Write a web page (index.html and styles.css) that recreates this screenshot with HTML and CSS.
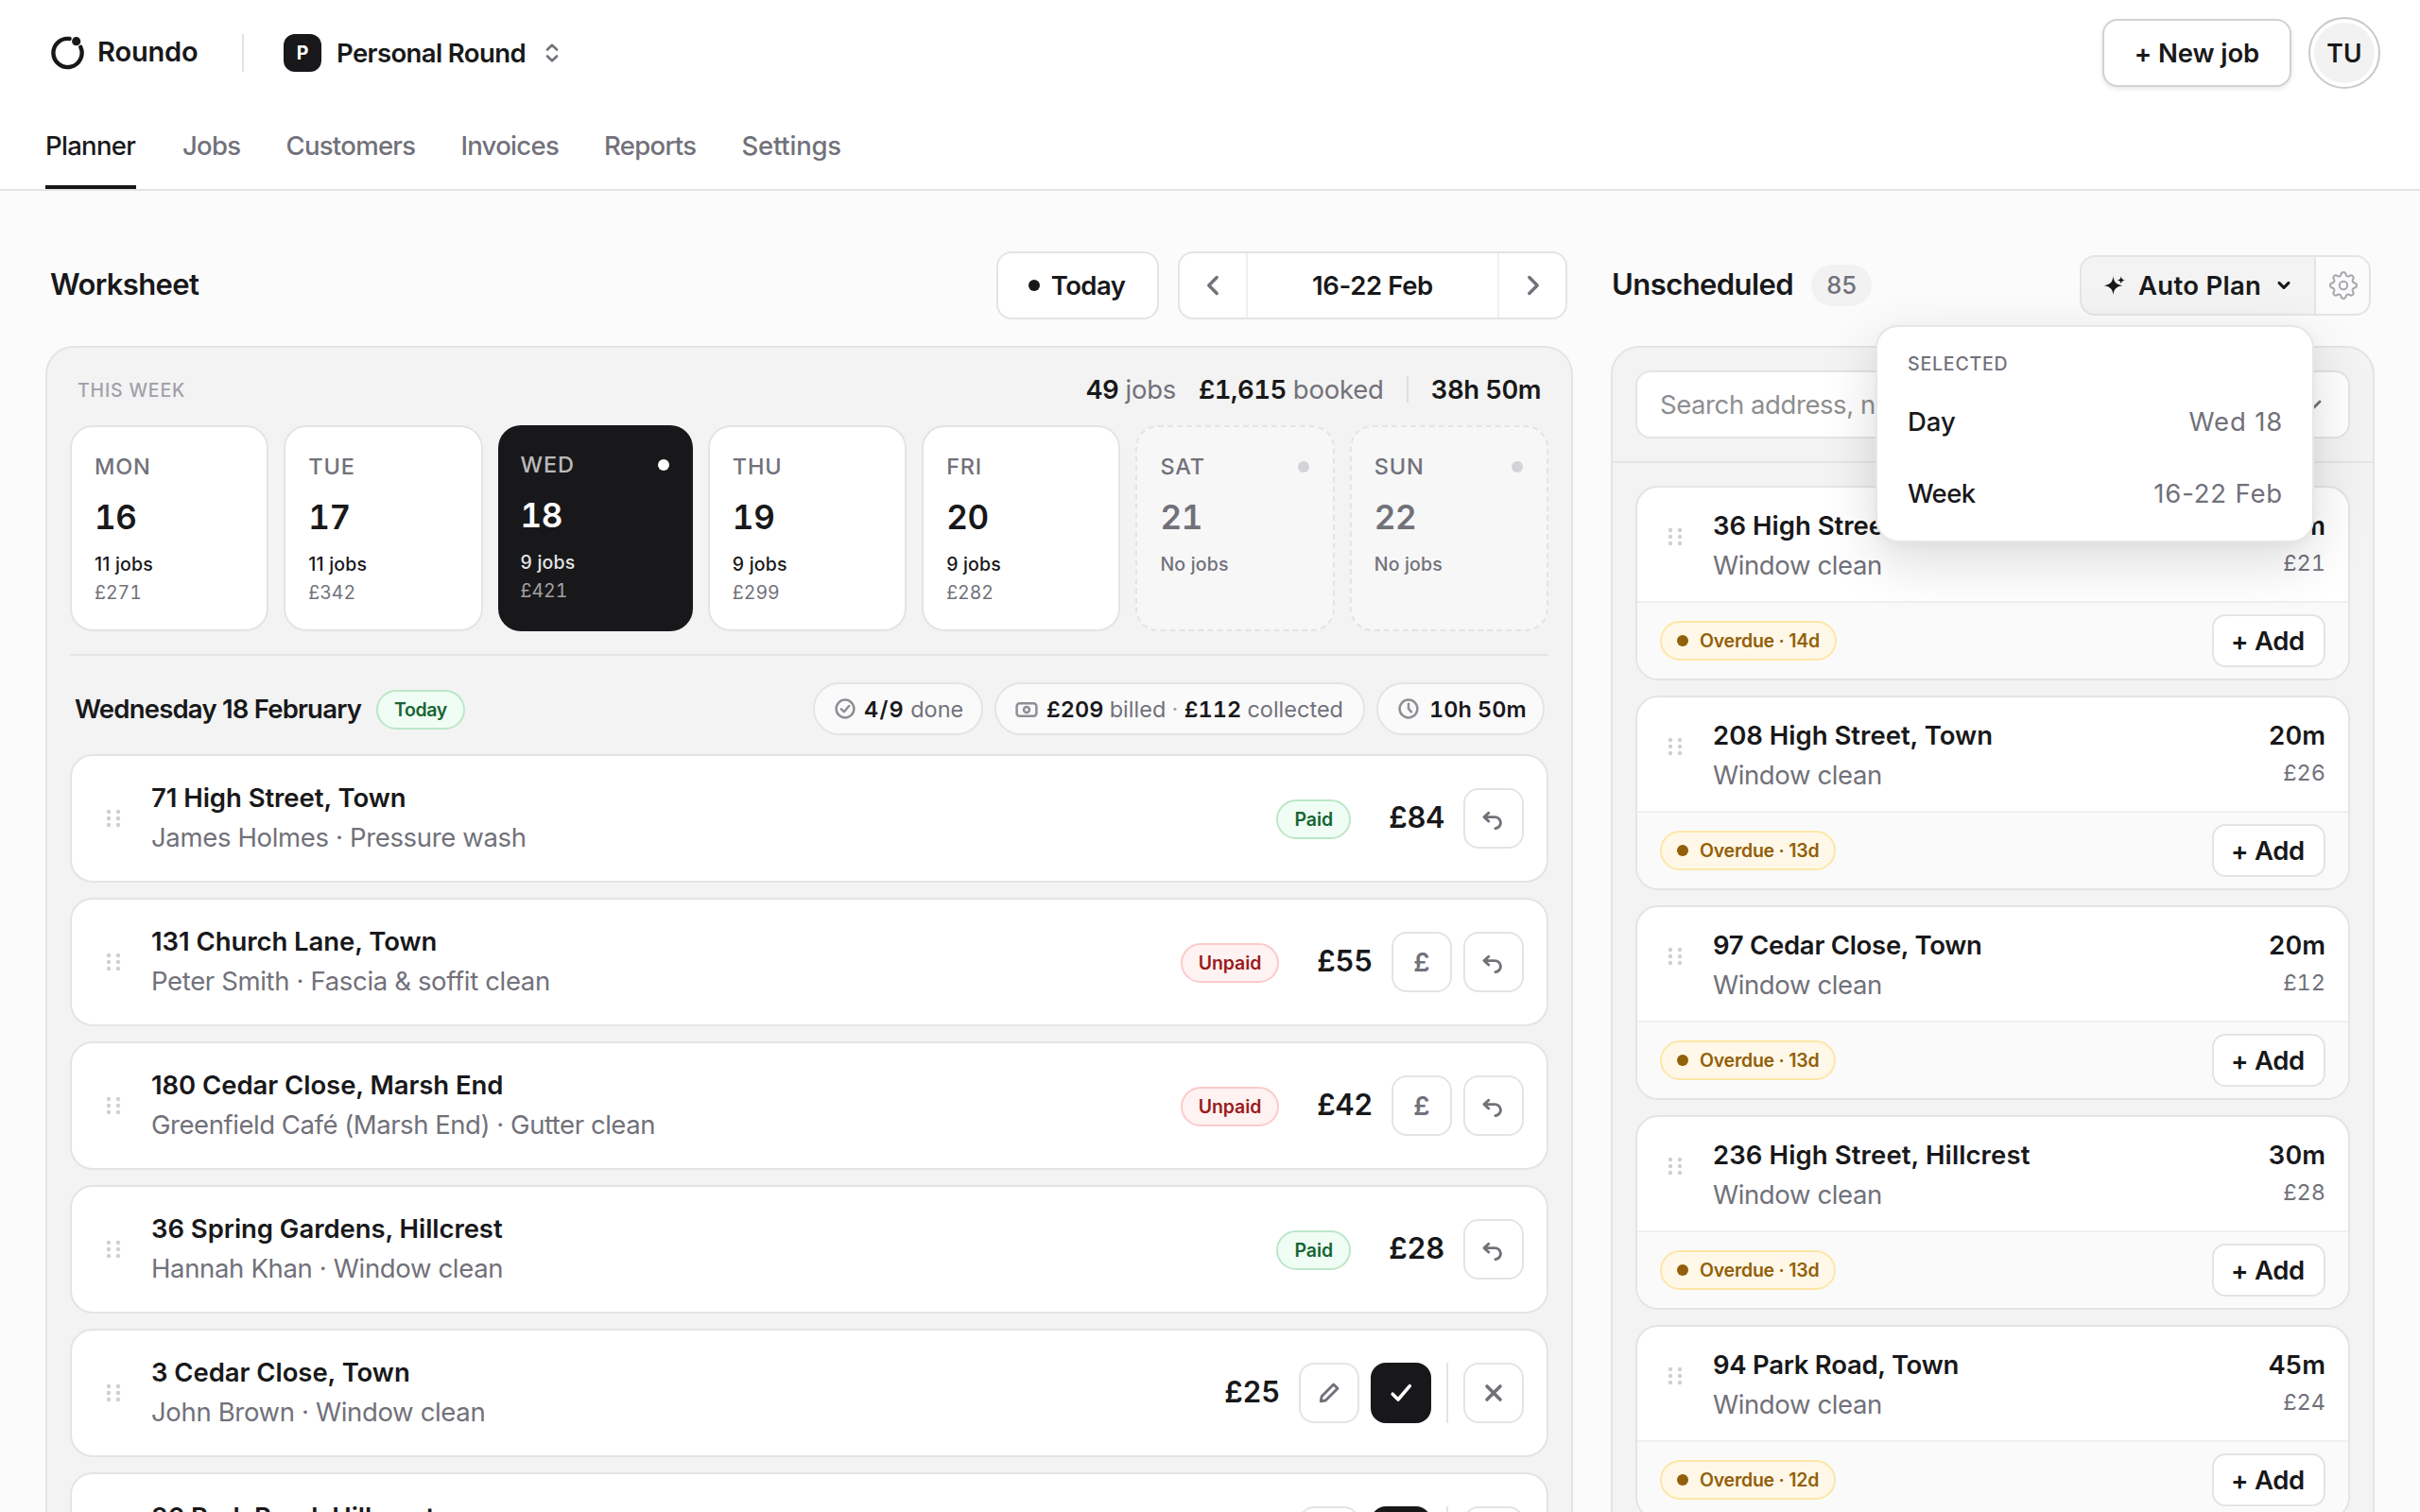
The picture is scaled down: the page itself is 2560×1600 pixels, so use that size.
FILE: index.html
```
<!DOCTYPE html>
<html lang="en">
<head>
<meta charset="utf-8">
<title>Roundo – Planner</title>
<link rel="stylesheet" href="styles.css">
</head>
<body>
<svg class="sprite" aria-hidden="true">
  <symbol id="i-grip" viewBox="0 0 16 20"><g fill="currentColor"><circle cx="3" cy="3" r="2.2"/><circle cx="13" cy="3" r="2.2"/><circle cx="3" cy="10" r="2.2"/><circle cx="13" cy="10" r="2.2"/><circle cx="3" cy="17" r="2.2"/><circle cx="13" cy="17" r="2.2"/></g></symbol>
  <symbol id="i-undo" viewBox="0 0 24 24"><path d="M6.3 6.2 1.6 10.6l4.7 4.4M1.6 10.6h10.9a6 6 0 0 1 1 12" transform="translate(.4 0)"/></symbol>
  <symbol id="i-edit" viewBox="0 0 24 24"><path d="M16.7 3 21 7.2 8.2 20 3.3 20.8 4.1 15.8Z"/></symbol>
  <symbol id="i-check" viewBox="0 0 24 24"><path d="M3.2 13.2 9 19 21.3 4.7"/></symbol>
  <symbol id="i-x" viewBox="0 0 24 24"><path d="M5 5 19 19M19 5 5 19"/></symbol>
</svg>

<header class="header">
  <div class="topbar">
    <a class="brand">
      <svg class="brand-mark" viewBox="0 0 48 48"><path d="M25.6 9A15.1 15.1 0 1 0 37.3 17.8" fill="none" stroke="#18181a" stroke-width="4.4" stroke-linecap="round"/><circle cx="32.7" cy="11.7" r="4.6" fill="#18181a"/></svg>
      <span class="brand-name">Roundo</span>
    </a>
    <span class="topbar-rule"></span>
    <div class="workspace">
      <span class="workspace-badge">P</span>
      <span class="workspace-name">Personal Round</span>
      <svg class="workspace-arrows" viewBox="0 0 16 24"><path d="M3 8.5 8 3.8 13 8.5M3 15.5 8 20.2 13 15.5"/></svg>
    </div>
    <button class="new-job">+ New job</button>
    <span class="avatar"><span class="avatar-inner">TU</span></span>
  </div>
  <nav class="tabs">
    <a class="tab tab-active">Planner</a>
    <a class="tab">Jobs</a>
    <a class="tab">Customers</a>
    <a class="tab">Invoices</a>
    <a class="tab">Reports</a>
    <a class="tab tab-wide">Settings</a>
  </nav>
</header>

<main class="main">
  <section class="col-work">
    <div class="title-row title-row-work">
      <h1 class="title">Worksheet</h1>
      <button class="today-btn"><span class="dot"></span>Today</button>
      <div class="range">
        <span class="range-step"><svg class="range-icon" viewBox="0 0 24 24"><path d="M16.2 3.5 7.8 12l8.4 8.5"/></svg></span>
        <span class="range-label">16-22 Feb</span>
        <span class="range-step"><svg class="range-icon" viewBox="0 0 24 24"><path d="M8.8 3.5 17.2 12 8.8 20.5"/></svg></span>
      </div>
    </div>

    <div class="panel">
      <div class="week-head">
        <span class="week-label">THIS WEEK</span>
        <span class="week-stats">
          <span><b>49</b> jobs</span>
          <span><b>£1,615</b> booked</span>
          <span class="stats-rule"></span>
          <b>38h 50m</b>
        </span>
      </div>
      <div class="days">
        <div class="day"><div class="day-name">MON</div><div class="day-num">16</div><div class="day-jobs">11 jobs</div><div class="day-sum">£271</div></div>
        <div class="day"><div class="day-name">TUE</div><div class="day-num">17</div><div class="day-jobs">11 jobs</div><div class="day-sum">£342</div></div>
        <div class="day day-on"><div class="day-name">WED<span class="dot"></span></div><div class="day-num">18</div><div class="day-jobs">9 jobs</div><div class="day-sum">£421</div></div>
        <div class="day"><div class="day-name">THU</div><div class="day-num">19</div><div class="day-jobs">9 jobs</div><div class="day-sum">£299</div></div>
        <div class="day"><div class="day-name">FRI</div><div class="day-num">20</div><div class="day-jobs">9 jobs</div><div class="day-sum">£282</div></div>
        <div class="day day-off"><div class="day-name">SAT<span class="dot"></span></div><div class="day-num">21</div><div class="day-jobs">No jobs</div></div>
        <div class="day day-off"><div class="day-name">SUN<span class="dot"></span></div><div class="day-num">22</div><div class="day-jobs">No jobs</div></div>
      </div>
      <hr class="rule">
      <div class="date-head">
        <h2 class="date-title">Wednesday 18 February</h2>
        <span class="tag tag-green">Today</span>
        <div class="summary">
          <span class="chip chip-done"><svg class="chip-icon" viewBox="0 0 24 24"><circle cx="12" cy="12" r="9.4"/><path d="M7.9 12.4 10.9 15.2 16.2 9"/></svg><span><b>4/9</b> done</span></span>
          <span class="chip chip-money"><svg class="chip-icon" viewBox="0 0 24 24"><rect x="1.6" y="6.2" width="20.8" height="13.6" rx="3"/><circle cx="12" cy="13" r="3"/></svg><span><b>£209</b> billed <i>·</i> <b>£112</b> collected</span></span>
          <span class="chip chip-time"><svg class="chip-icon" viewBox="0 0 24 24"><circle cx="12" cy="12" r="9.4"/><path d="M12 6.8V12l3 3.4"/></svg><b>10h 50m</b></span>
        </div>
      </div>
      <div class="jobs">
        <article class="job">
          <svg class="grip"><use href="#i-grip"/></svg>
          <div class="job-text"><div class="job-title">71 High Street, Town</div><div class="job-sub">James Holmes · Pressure wash</div></div>
          <span class="tag tag-green">Paid</span><span class="price">£84</span>
          <div class="actions"><button class="act"><svg class="act-icon"><use href="#i-undo"/></svg></button></div>
        </article>
        <article class="job">
          <svg class="grip"><use href="#i-grip"/></svg>
          <div class="job-text"><div class="job-title">131 Church Lane, Town</div><div class="job-sub">Peter Smith · Fascia &amp; soffit clean</div></div>
          <span class="tag tag-red">Unpaid</span><span class="price">£55</span>
          <div class="actions"><button class="act">£</button><button class="act"><svg class="act-icon"><use href="#i-undo"/></svg></button></div>
        </article>
        <article class="job">
          <svg class="grip"><use href="#i-grip"/></svg>
          <div class="job-text"><div class="job-title">180 Cedar Close, Marsh End</div><div class="job-sub job-sub-long">Greenfield Café (Marsh End) · Gutter clean</div></div>
          <span class="tag tag-red">Unpaid</span><span class="price">£42</span>
          <div class="actions"><button class="act">£</button><button class="act"><svg class="act-icon"><use href="#i-undo"/></svg></button></div>
        </article>
        <article class="job">
          <svg class="grip"><use href="#i-grip"/></svg>
          <div class="job-text"><div class="job-title">36 Spring Gardens, Hillcrest</div><div class="job-sub">Hannah Khan · Window clean</div></div>
          <span class="tag tag-green">Paid</span><span class="price">£28</span>
          <div class="actions"><button class="act"><svg class="act-icon"><use href="#i-undo"/></svg></button></div>
        </article>
        <article class="job">
          <svg class="grip"><use href="#i-grip"/></svg>
          <div class="job-text"><div class="job-title">3 Cedar Close, Town</div><div class="job-sub">John Brown · Window clean</div></div>
          <span class="price">£25</span>
          <div class="actions"><button class="act"><svg class="act-icon"><use href="#i-edit"/></svg></button><button class="act act-done"><svg class="act-icon act-bold"><use href="#i-check"/></svg></button><span class="act-rule"></span><button class="act"><svg class="act-icon act-bold"><use href="#i-x"/></svg></button></div>
        </article>
        <article class="job">
          <svg class="grip"><use href="#i-grip"/></svg>
          <div class="job-text"><div class="job-title">86 Park Road, Hillcrest</div></div>
          <div class="actions"><button class="act"><svg class="act-icon"><use href="#i-edit"/></svg></button><button class="act act-done"><svg class="act-icon act-bold"><use href="#i-check"/></svg></button><span class="act-rule"></span><button class="act"><svg class="act-icon act-bold"><use href="#i-x"/></svg></button></div>
        </article>
      </div>
    </div>
  </section>

  <aside class="col-side">
    <div class="title-row title-row-side">
      <h1 class="title title-side">Unscheduled</h1>
      <span class="count">85</span>
      <div class="plan">
        <button class="plan-main">
          <svg class="plan-spark" viewBox="0 0 24 24"><path d="M11.5 2.3C12.2 8.6 14.8 11.2 21.2 12.2 14.8 13.2 12.2 15.8 11.5 22 10.8 15.8 8.2 13.2 1.8 12.2 8.2 11.2 10.8 8.6 11.5 2.3Z"/><path d="M19.8 2.2C20.1 4.8 21.2 6 23.8 6.4 21.2 6.8 20.1 8 19.8 10.6 19.5 8 18.4 6.8 15.8 6.4 18.4 6 19.5 4.8 19.8 2.2Z"/></svg>
          <span>Auto Plan</span>
          <svg class="plan-caret" viewBox="0 0 14 10"><path d="M2 2.4 7 7.4 12 2.4"/></svg>
        </button>
        <button class="plan-gear"><svg class="gear" viewBox="-16 -16 32 32"><g id="gear-teeth"><path d="M0-14C3.6-14 1.34-10.81 4.02-9.7C6.7-8.59 7.35-12.45 9.9-9.9C12.45-7.35 8.59-6.7 9.7-4.02C10.81-1.34 14-3.6 14 0"/></g><use href="#gear-teeth" transform="rotate(90)"/><use href="#gear-teeth" transform="rotate(180)"/><use href="#gear-teeth" transform="rotate(270)"/><circle r="4.2"/></svg></button>
        <div class="menu">
          <div class="menu-label">SELECTED</div>
          <div class="menu-item"><span class="menu-key menu-day">Day</span><span class="menu-val">Wed 18</span></div>
          <div class="menu-item"><span class="menu-key">Week</span><span class="menu-val">16-22 Feb</span></div>
        </div>
      </div>
    </div>

    <div class="panel panel-side">
      <div class="filters">
        <div class="search"><span>Search address, name</span><svg class="search-caret" viewBox="0 0 16 12"><path d="M2 3 8 9 14 3"/></svg></div>
      </div>
      <div class="queue">
        <article class="card">
          <div class="card-top"><svg class="grip"><use href="#i-grip"/></svg><div class="job-text"><div class="card-title">36 High Street, Town</div><div class="card-sub">Window clean</div></div><div class="card-meta"><div class="card-time">20m</div><div class="card-price">£21</div></div></div>
          <div class="card-foot"><span class="tag tag-amber"><span class="dot"></span>Overdue · 14d</span><button class="add">+ Add</button></div>
        </article>
        <article class="card">
          <div class="card-top"><svg class="grip"><use href="#i-grip"/></svg><div class="job-text"><div class="card-title">208 High Street, Town</div><div class="card-sub">Window clean</div></div><div class="card-meta"><div class="card-time">20m</div><div class="card-price">£26</div></div></div>
          <div class="card-foot"><span class="tag tag-amber"><span class="dot"></span>Overdue · 13d</span><button class="add">+ Add</button></div>
        </article>
        <article class="card">
          <div class="card-top"><svg class="grip"><use href="#i-grip"/></svg><div class="job-text"><div class="card-title card-title-tight">97 Cedar Close, Town</div><div class="card-sub">Window clean</div></div><div class="card-meta"><div class="card-time">20m</div><div class="card-price">£12</div></div></div>
          <div class="card-foot"><span class="tag tag-amber"><span class="dot"></span>Overdue · 13d</span><button class="add">+ Add</button></div>
        </article>
        <article class="card">
          <div class="card-top"><svg class="grip"><use href="#i-grip"/></svg><div class="job-text"><div class="card-title card-title-loose">236 High Street, Hillcrest</div><div class="card-sub">Window clean</div></div><div class="card-meta"><div class="card-time">30m</div><div class="card-price">£28</div></div></div>
          <div class="card-foot"><span class="tag tag-amber"><span class="dot"></span>Overdue · 13d</span><button class="add">+ Add</button></div>
        </article>
        <article class="card">
          <div class="card-top"><svg class="grip"><use href="#i-grip"/></svg><div class="job-text"><div class="card-title card-title-tight">94 Park Road, Town</div><div class="card-sub">Window clean</div></div><div class="card-meta"><div class="card-time">45m</div><div class="card-price">£24</div></div></div>
          <div class="card-foot"><span class="tag tag-amber"><span class="dot"></span>Overdue · 12d</span><button class="add">+ Add</button></div>
        </article>
      </div>
    </div>
  </aside>
</main>
</body>
</html>
```
FILE: styles.css
```
:root {
  --ink: #18181a;
  --muted: #71717a;
  --faint: #a1a1aa;
  --line: #e4e4e4;
  --line-soft: #f0f0f0;
  --panel: #f3f3f3;
  --page: #fbfbfb;
}

* { box-sizing: border-box; margin: 0; }

body {
  height: 1600px;
  overflow: hidden;
  display: flex;
  flex-direction: column;
  background: var(--page);
  color: var(--ink);
  font-family: Inter, "Liberation Sans", sans-serif;
  font-size: 27.5px;
}

button { font: inherit; color: inherit; padding: 0; background: #fff; border: 2px solid var(--line); }
b { font-weight: 600; color: var(--ink); }
svg { display: block; flex: none; overflow: visible; }
.sprite { position: absolute; width: 0; height: 0; }

.dot { width: 12px; height: 12px; border-radius: 50%; background: currentColor; flex: none; }

/* Header */
.header { flex: none; background: #fff; border-bottom: 2px solid var(--line); }
.topbar { height: 112px; padding: 0 42px 0 48px; display: flex; align-items: center; }
.brand { display: flex; align-items: center; }
.brand-mark { width: 48px; height: 48px; }
.brand-name { margin: 0 0 3px 7px; width: 107px; font-size: 29px; font-weight: 600; letter-spacing: -.0055em; }
.topbar-rule { width: 2px; height: 40px; margin: 0 42px 0 46px; background: var(--line); }
.workspace { display: flex; align-items: center; }
.workspace-badge { width: 40px; height: 40px; border-radius: 12px; background: var(--ink); color: #fff; font-size: 19.5px; font-weight: 700; line-height: 41px; text-align: center; }
.workspace-name { margin-left: 16px; font-weight: 600; letter-spacing: -.022em; }
.workspace-arrows { width: 16px; height: 24px; margin-left: 20px; fill: none; stroke: var(--muted); stroke-width: 2.6; stroke-linecap: round; stroke-linejoin: round; }
.new-job { width: 200px; height: 72px; margin-left: auto; border-color: #d2d2d2; border-radius: 16px; font-weight: 600; letter-spacing: -.004em; box-shadow: 0 2px 5px rgba(0, 0, 0, .1); }
.avatar { width: 76px; height: 76px; margin-left: 18px; padding: 4px; border: 2px solid #c9c9c9; border-radius: 50%; }
.avatar-inner { display: block; height: 64px; border-radius: 50%; background: #f2f2f2; font-size: 26.5px; font-weight: 600; letter-spacing: .01em; line-height: 64px; text-align: center; }

.tabs { height: 88px; padding-left: 48px; display: flex; gap: 48px; }
.tab { height: 88px; padding-top: 4px; border-bottom: 4px solid transparent; line-height: 76px; font-weight: 500; letter-spacing: -.0255em; color: var(--muted); }
.tab-active { width: 96px; margin-right: 1px; color: var(--ink); border-color: var(--ink); }
.tab-wide { letter-spacing: -.0072em; }

/* Layout */
.main { flex: 1; min-height: 0; overflow: hidden; padding: 64px 48px 0; display: grid; grid-template-columns: 1616px 808px; gap: 40px; }
.title-row { height: 72px; margin-bottom: 28px; display: flex; align-items: center; }
.title-row-work { padding: 0 6px 0 5px; }
.title-row-side { padding: 0 4px 0 1px; }
.title { margin-bottom: 3px; font-size: 31px; line-height: 40px; font-weight: 600; letter-spacing: -.0204em; }
.title-side { letter-spacing: -.018em; }

.today-btn { width: 172px; height: 72px; margin: 0 20px 0 auto; padding-right: 2px; border-radius: 16px; display: flex; align-items: center; justify-content: center; gap: 12px; font-weight: 600; letter-spacing: -.0204em; }
.range { width: 412px; height: 72px; display: flex; background: #fff; border: 2px solid var(--line); border-radius: 16px; }
.range-step { width: 70px; display: grid; place-items: center; }
.range-label { flex: 1; border: solid var(--line-soft); border-width: 0 2px; line-height: 68px; text-align: center; font-weight: 600; letter-spacing: -.0139em; }
.range-icon { width: 24px; height: 24px; fill: none; stroke: var(--muted); stroke-width: 3.4; stroke-linecap: round; stroke-linejoin: round; }

.panel { height: 1400px; padding: 26px 24px 0; background: var(--panel); border: 2px solid var(--line); border-radius: 30px; }

/* Week overview */
.week-head { height: 36px; margin-bottom: 20px; padding: 0 8px; display: flex; align-items: center; justify-content: space-between; }
.week-label { padding-top: 2px; font-size: 19.5px; font-weight: 500; letter-spacing: .042em; color: var(--faint); }
.week-stats { display: flex; align-items: center; gap: 24px; color: var(--muted); letter-spacing: -.008em; font-variant-numeric: tabular-nums; }
.week-stats b { letter-spacing: -.02em; }
.stats-rule { width: 2px; height: 28px; background: #dedede; }

.days { display: flex; gap: 16px; }
.day { flex: 1 1 0; min-width: 0; box-sizing: content-box; padding: 24px; background: #fff; border: 2px solid var(--line); border-radius: 24px; }
.day-name { display: flex; align-items: center; justify-content: space-between; padding: 1px 1px 0 0; line-height: 34px; font-size: 23.5px; font-weight: 500; letter-spacing: .035em; color: var(--muted); }
.day-num { margin-top: 12px; line-height: 48px; font-size: 35px; font-weight: 600; letter-spacing: -.01em; font-variant-numeric: tabular-nums; }
.day-jobs { margin-top: 11px; line-height: 30px; font-size: 19.5px; font-weight: 500; letter-spacing: .01em; }
.day-sum { line-height: 30px; font-size: 19.5px; color: var(--muted); font-variant-numeric: tabular-nums; }
.day-on { background: var(--ink); border: 0; color: #fff; }
.day-on .day-name { color: #bababb; }
.day-on .day-name .dot { background: #fff; }
.day-on .day-jobs { color: #e3e3e3; }
.day-on .day-sum { color: #a3a3a4; }
.day-off { background: #f7f7f7; border-style: dashed; color: var(--muted); }
.day-off .dot { background: #d4d4d8; }

.rule { height: 2px; margin: 24px 0 0; border: 0; background: var(--line); }

/* Selected day */
.date-head { height: 56px; margin: 28px 0 20px; padding: 0 4px 0 5px; display: flex; align-items: center; }
.date-title { width: 319px; font-size: 27.5px; font-weight: 600; letter-spacing: -.029em; white-space: nowrap; }
.summary { margin-left: auto; display: flex; gap: 12px; }
.chip { height: 56px; padding-left: 20px; display: flex; align-items: center; gap: 9px; white-space: nowrap; background: #fafafa; border: 2px solid var(--line); border-radius: 28px; font-size: 23.5px; color: var(--muted); font-variant-numeric: tabular-nums; }
.chip-done { width: 180px; gap: 8px; }
.chip-done b { letter-spacing: .05em; }
.chip-money { width: 392px; }
.chip-time { width: 178px; gap: 10px; }
.chip i { font-style: normal; color: var(--faint); }
.chip-icon { width: 24px; height: 24px; fill: none; stroke: #8e8e96; stroke-width: 2.5; stroke-linecap: round; stroke-linejoin: round; }

.tag { height: 42px; padding: 0 17px; display: inline-flex; align-items: center; border: 2px solid; border-radius: 21px; font-size: 19.5px; font-weight: 600; line-height: 38px; }
.tag-green { color: #166534; background: #f0fdf4; border-color: #bbe7c8; }
.date-head .tag { margin-top: 2px; letter-spacing: -.02em; }
.tag-red { color: #991b1b; background: #fef2f2; border-color: #fccaca; letter-spacing: -.004em; }
.tag-amber { color: #92600a; background: #fff8e8; border-color: #fde6a6; padding: 0 16px; gap: 12px; letter-spacing: -.012em; }

/* Job rows */
.jobs { display: flex; flex-direction: column; gap: 16px; }
.job { height: 136px; flex: none; padding: 0 24px; display: flex; align-items: center; background: #fff; border: 2px solid var(--line); border-radius: 24px; }
.job:last-child { align-items: flex-start; padding-top: 34px; }
.job:last-child .job-text { margin-top: -8px; }
.job:last-child .grip { margin-top: 22px; }
.grip { width: 16px; height: 20px; margin: 0 32px 0 12px; color: #d0d0d3; }
.job-text { flex: 1; min-width: 0; }
.job-title { margin: -1px 0 1px; line-height: 41px; font-weight: 600; letter-spacing: -.002em; }
.job-sub { line-height: 41px; letter-spacing: -.0125em; color: var(--muted); }
.job-sub-long { letter-spacing: -.0165em; }
.job .tag { margin-top: 2px; }
.price { margin: 0 20px 3px 40px; font-size: 31px; font-weight: 600; letter-spacing: -.01em; font-variant-numeric: tabular-nums; }
.actions { display: flex; gap: 12px; }
.act { width: 64px; height: 64px; display: grid; place-items: center; border-radius: 16px; color: var(--muted); font-weight: 600; font-size: 27.5px; }
.act-done { background: var(--ink); border-color: var(--ink); color: #fff; }
.act-rule { width: 2px; margin: 0 4px; background: var(--line); }
.act-icon { width: 24px; height: 24px; fill: none; stroke: currentColor; stroke-width: 2.9; stroke-linecap: round; stroke-linejoin: round; }
.act-bold { stroke-width: 3.6; }

/* Unscheduled column */
.count { width: 64px; height: 44px; margin-left: 19px; border-radius: 22px; background: #f2f2f2; color: var(--muted); font-size: 25.5px; font-weight: 500; line-height: 44px; text-align: center; }
.plan { position: relative; margin-left: auto; width: 308px; height: 64px; display: flex; }
.plan-main { width: 250px; padding-left: 22px; display: flex; align-items: center; background: #f3f3f3; border-radius: 16px 0 0 16px; font-weight: 600; letter-spacing: .0105em; }
.plan-spark { width: 24px; height: 24px; margin-right: 14px; fill: currentColor; }
.plan-caret { width: 14px; height: 10px; margin-left: 17px; fill: none; stroke: currentColor; stroke-width: 3; stroke-linecap: round; stroke-linejoin: round; }
.plan-gear { width: 58px; padding-left: 2px; display: grid; place-items: center; background: var(--page); border-left: 0; border-radius: 0 16px 16px 0; }
.gear { width: 32px; height: 32px; fill: none; stroke: #a6a6af; stroke-width: 2; }

.menu { position: absolute; z-index: 2; top: 74px; right: 60px; width: 464px; height: 230px; padding: 10px 31px 0 32px; background: #fff; border: 2px solid #e6e6e6; border-radius: 24px; box-shadow: 0 20px 60px rgba(0, 0, 0, .14), 0 4px 12px rgba(0, 0, 0, .03); }
.menu-label { height: 52px; padding-top: 6px; line-height: 46px; font-size: 19.5px; font-weight: 500; letter-spacing: .0415em; color: var(--muted); }
.menu-item { height: 76px; display: flex; align-items: center; justify-content: space-between; }
.menu-key { font-weight: 500; letter-spacing: -.022em; }
.menu-day { letter-spacing: 0; }
.menu-val { color: var(--muted); letter-spacing: .03em; }

.panel-side { padding: 0; }
.filters { padding: 24px; border-bottom: 2px solid var(--line); }
.search { height: 72px; padding: 0 28px 0 24px; display: flex; align-items: center; justify-content: space-between; background: #fff; border: 2px solid var(--line); border-radius: 16px; letter-spacing: -.0153em; color: #8e8e90; }
.search-caret { width: 16px; height: 12px; fill: none; stroke: var(--muted); stroke-width: 2.8; stroke-linecap: round; stroke-linejoin: round; }
.queue { padding: 24px 24px 0; display: flex; flex-direction: column; gap: 16px; }
.card { height: 206px; flex: none; overflow: hidden; background: #fff; border: 2px solid var(--line); border-radius: 24px; }
.card-top { height: 120px; padding: 19px 24px 0; display: flex; }
.card .grip { margin: 23px 32px 0 8px; }
.card-title { line-height: 42px; font-weight: 600; }
.card-title-tight { letter-spacing: -.01em; }
.card-title-loose { letter-spacing: .004em; }
.card-sub { line-height: 42px; letter-spacing: -.0138em; color: var(--muted); }
.card-meta { text-align: right; font-variant-numeric: tabular-nums; }
.card-time { line-height: 42px; font-weight: 600; }
.card-price { line-height: 38px; font-size: 23.5px; color: var(--muted); }
.card-foot { height: 82px; padding: 0 24px; display: flex; align-items: center; justify-content: space-between; background: #fafafa; border-top: 2px solid var(--line-soft); }
.add { width: 120px; height: 56px; padding-right: 2px; border-radius: 14px; font-weight: 600; letter-spacing: -.0108em; }
```
